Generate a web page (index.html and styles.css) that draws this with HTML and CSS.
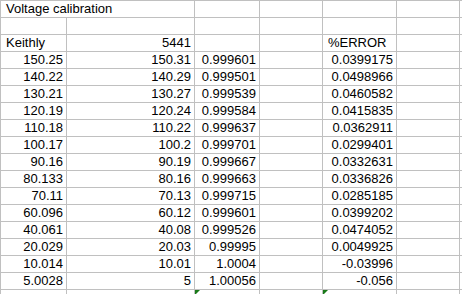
FILE: index.html
```html
<!DOCTYPE html>
<html>
<head>
<meta charset="utf-8">
<link rel="stylesheet" href="styles.css">
</head>
<body>
<table class="sheet">
<colgroup>
<col class="ca"><col class="cb"><col class="cc"><col class="cd"><col class="ce"><col class="cf"><col class="cg">
</colgroup>
<tr><td colspan="2" class="l">Voltage calibration</td><td></td><td></td><td></td><td></td><td></td></tr>
<tr><td></td><td></td><td></td><td></td><td></td><td></td><td></td></tr>
<tr><td class="l">Keithly</td><td>5441</td><td></td><td></td><td class="l">%ERROR</td><td></td><td></td></tr>
<tr><td>150.25</td><td>150.31</td><td>0.999601</td><td></td><td>0.0399175</td><td></td><td></td></tr>
<tr><td>140.22</td><td>140.29</td><td>0.999501</td><td></td><td>0.0498966</td><td></td><td></td></tr>
<tr><td>130.21</td><td>130.27</td><td>0.999539</td><td></td><td>0.0460582</td><td></td><td></td></tr>
<tr><td>120.19</td><td>120.24</td><td>0.999584</td><td></td><td>0.0415835</td><td></td><td></td></tr>
<tr><td>110.18</td><td>110.22</td><td>0.999637</td><td></td><td>0.0362911</td><td></td><td></td></tr>
<tr><td>100.17</td><td>100.2</td><td>0.999701</td><td></td><td>0.0299401</td><td></td><td></td></tr>
<tr><td>90.16</td><td>90.19</td><td>0.999667</td><td></td><td>0.0332631</td><td></td><td></td></tr>
<tr><td>80.133</td><td>80.16</td><td>0.999663</td><td></td><td>0.0336826</td><td></td><td></td></tr>
<tr><td>70.11</td><td>70.13</td><td>0.999715</td><td></td><td>0.0285185</td><td></td><td></td></tr>
<tr><td>60.096</td><td>60.12</td><td>0.999601</td><td></td><td>0.0399202</td><td></td><td></td></tr>
<tr><td>40.061</td><td>40.08</td><td>0.999526</td><td></td><td>0.0474052</td><td></td><td></td></tr>
<tr><td>20.029</td><td>20.03</td><td>0.99995</td><td></td><td>0.0049925</td><td></td><td></td></tr>
<tr><td>10.014</td><td>10.01</td><td>1.0004</td><td></td><td>-0.03996</td><td></td><td></td></tr>
<tr><td>5.0028</td><td>5</td><td>1.00056</td><td></td><td>-0.056</td><td></td><td></td></tr>
<tr><td></td><td></td><td class="mark"><span class="tri"></span></td><td></td><td class="mark"><span class="tri"></span></td><td></td><td></td></tr>
</table>
</body>
</html>
```
FILE: styles.css
```css
html, body {
  margin: 0;
  padding: 0;
  background: #fff;
  overflow: hidden;
}
.sheet {
  border-collapse: collapse;
  table-layout: fixed;
  width: 462px;
  font-family: "Liberation Sans", Arial, sans-serif;
  font-size: 13px;
  color: #000;
}
.ca { width: 66px; }
.cb { width: 128px; }
.cc { width: 65px; }
.cd { width: 63px; }
.ce { width: 74px; }
.cf { width: 63px; }
.cg { width: 3px; }
.sheet td {
  border: 1px solid #c0c0c0;
  height: 16px;
  padding: 0 3px 0 4px;
  line-height: 16px;
  vertical-align: bottom;
  text-align: right;
  white-space: nowrap;
  overflow: visible;
}
.sheet td:nth-child(7) {
  padding: 0;
  border-right: none;
}
.sheet td.l {
  text-align: left;
  padding-left: 5px;
}
.sheet td.mark {
  position: relative;
}
.tri {
  position: absolute;
  left: 0;
  top: 0;
  width: 0;
  height: 0;
  border-top: 5px solid #1a7a1a;
  border-right: 5px solid transparent;
}
```
